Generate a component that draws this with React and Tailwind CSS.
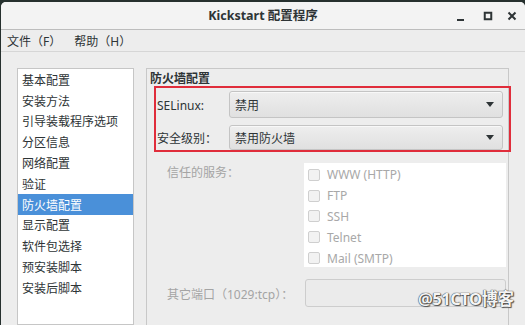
import React from "react";

const FONT = { fontFamily: '"Noto Sans", "Noto Sans CJK SC", sans-serif' };

const navItems = [
  "基本配置",
  "安装方法",
  "引导装载程序选项",
  "分区信息",
  "网络配置",
  "验证",
  "防火墙配置",
  "显示配置",
  "软件包选择",
  "预安装脚本",
  "安装后脚本",
];

const services = ["WWW (HTTP)", "FTP", "SSH", "Telnet", "Mail (SMTP)"];

function Combo({ text, h }) {
  return (
    <div
      className={`flex-1 ${h} flex items-center justify-between pl-[5px] pr-[8px] rounded-[3px] border border-[#c4c4c4] bg-gradient-to-b from-[#eeeeee] to-[#e0e0e0] shadow-[inset_0_1px_0_#f8f8f8]`}
    >
      <span className="text-[12px] text-[#2e3436] leading-none pt-[3px]">{text}</span>
      <svg width="8" height="5" viewBox="0 0 8 5">
        <path d="M0 0 L8 0 L4 5 Z" fill="#2e3436" />
      </svg>
    </div>
  );
}

export default function App() {
  return (
    <div className="w-[525px] h-[325px] overflow-hidden bg-[#26302e] relative" style={FONT}>
      <div className="mt-[2px] ml-[1px] h-[323px] rounded-t-[5px] bg-[#ededed] flex flex-col overflow-hidden">
        {/* title bar */}
        <div className="h-[28px] shrink-0 bg-[#f3f3f3] border-b border-[#bdbdbd] flex items-center">
          <div className="flex-1" />
          <div className="text-[12.5px] font-bold text-[#2e3436] leading-none pl-[8px] pt-[2px]">
            Kickstart 配置程序
          </div>
          <div className="flex-1 flex justify-end items-center pr-[8px]">
            <svg width="10" height="10" viewBox="0 0 10 10" className="mt-[4px]">
              <rect x="1" y="6" width="7" height="2" fill="#2e3436" />
            </svg>
            <svg width="10" height="10" viewBox="0 0 10 10" className="ml-[17px]">
              <rect x="1.75" y="1.75" width="6.5" height="6.5" fill="none" stroke="#2e3436" strokeWidth="2" />
            </svg>
            <svg width="10" height="10" viewBox="0 0 10 10" className="ml-[14px]">
              <path d="M1.5 1.5 L8.5 8.5 M8.5 1.5 L1.5 8.5" stroke="#2e3436" strokeWidth="2" />
            </svg>
          </div>
        </div>
        {/* menu bar */}
        <div className="h-[22px] shrink-0 border-b border-[#d6d6d6] flex items-center pl-[6px] pt-[3px] gap-[13px] text-[12px] leading-none text-[#2e3436]">
          <span>文件（F）</span>
          <span>帮助（H）</span>
        </div>
        {/* content */}
        <div className="flex-1 flex pt-[16px] pl-[16px]">
          <div className="w-[117px] bg-white border border-[#c6c6c6] self-stretch shrink-0">
            {navItems.map((t) => {
              const sel = t === "防火墙配置";
              return (
                <div
                  key={t}
                  className={`h-[20.8px] flex items-center pl-[4px] pt-[3px] text-[12px] leading-none ${
                    sel ? "bg-[#4a90d9] text-white" : "text-[#2e3436]"
                  }`}
                >
                  {t}
                </div>
              );
            })}
          </div>
          <div className="ml-[12px] w-[363px] self-stretch border-l border-t border-r border-[#c8c8c8] flex flex-col">
            <div className="h-[17px] pl-[3px] pt-[2px] flex items-center text-[12px] font-bold text-[#2e3436] leading-none">
              防火墙配置
            </div>
            {/* red annotated box */}
            <div className="ml-[7px] w-[357px] h-[66px] border-2 border-[#e02d3b] flex flex-col pt-[3px] pr-[6px] gap-[7px]">
              <div className="flex items-center">
                <div className="w-[73px] pl-[1px] pt-[3px] text-[12px] leading-none text-[#2e3436]">SELinux:</div>
                <Combo text="禁用" h="h-[27px]" />
              </div>
              <div className="flex items-center">
                <div className="w-[73px] pl-[1px] pt-[3px] text-[12px] leading-none text-[#2e3436]">安全级别：</div>
                <Combo text="禁用防火墙" h="h-[25px]" />
              </div>
            </div>
            {/* trusted services */}
            <div className="flex mt-[11px]">
              <div className="w-[157px] pl-[20px] pt-[1px] text-[12px] text-[#a4a4a4] leading-[18px]">
                信任的服务：
              </div>
              <div className="w-[202px] h-[104px] bg-white flex flex-col">
                {services.map((s) => (
                  <div key={s} className="h-[20.8px] flex items-center pl-[4px] pt-[3px] gap-[7px]">
                    <div className="w-[12px] h-[12px] rounded-[2px] border border-[#cfcfcf] bg-[#f2f2f2]" />
                    <span className="text-[12px] text-[#a8a8a8] leading-none pt-[1px]">{s}</span>
                  </div>
                ))}
              </div>
            </div>
            {/* other ports */}
            <div className="flex items-center mt-[12px]">
              <div className="w-[158px] pl-[20px] pt-[3px] text-[12px] leading-none text-[#a4a4a4]">其它端口（1029:tcp）：</div>
              <div className="w-[201px] h-[28px] rounded-[3px] border border-[#cdcdcd] bg-[#ebebeb]" />
            </div>
          </div>
        </div>
      </div>
      <div className="absolute left-[418px] top-[291px] text-[16.5px] font-bold text-[#f4f4f4] leading-none tracking-[-0.5px] [text-shadow:0_0_1px_#333,0_0_1px_#333,1px_1px_1px_#555]">
        @51CTO博客
      </div>
    </div>
  );
}
